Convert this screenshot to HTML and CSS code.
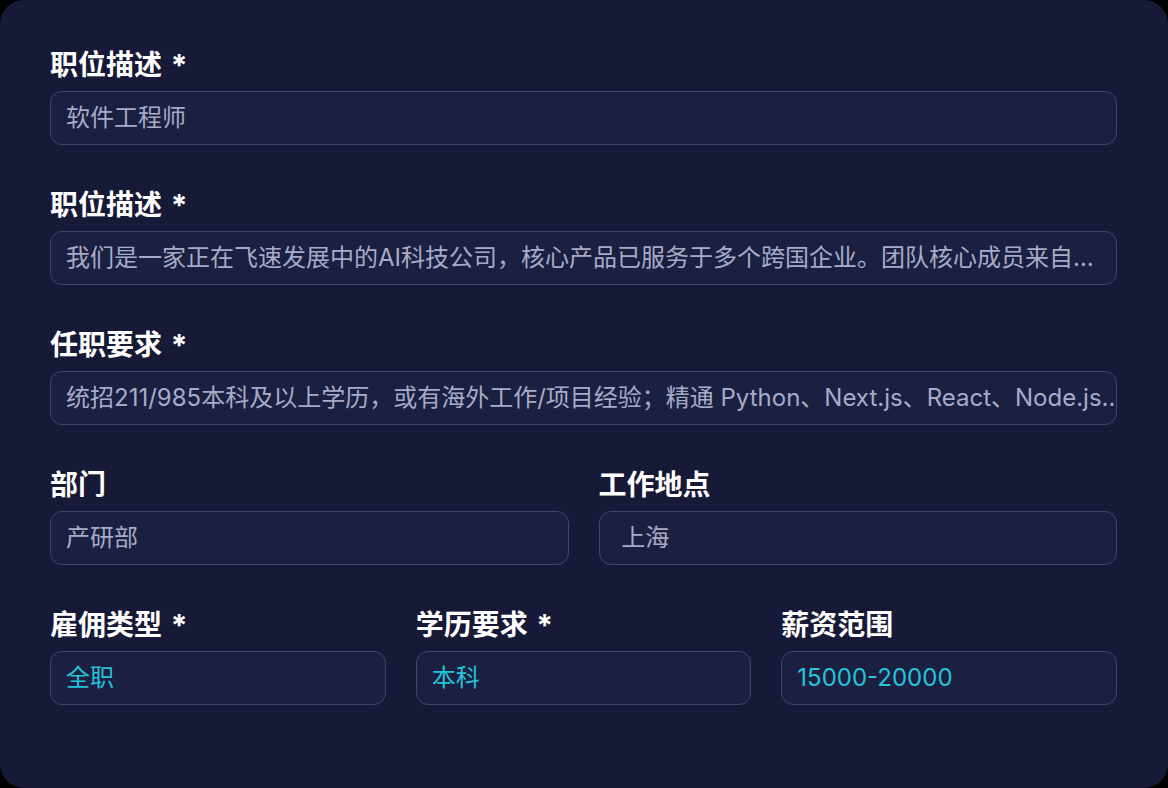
FILE: index.html
```html
<!DOCTYPE html>
<html>
<head>
    <title>职位信息</title>
    <link rel="stylesheet" href="styles.css">
</head>
<body>
    <div class="card">
        <div class="field">
            <label>职位描述 <span class="req">*</span></label>
            <div class="input">软件工程师</div>
        </div>

        <div class="field">
            <label>职位描述 <span class="req">*</span></label>
            <div class="input">我们是一家正在飞速发展中的AI科技公司，核心产品已服务于多个跨国企业。团队核心成员来自国内外知名互联网公司，拥有丰富的行业经验。</div>
        </div>

        <div class="field">
            <label>任职要求 <span class="req">*</span></label>
            <div class="input clip">统招211/985本科及以上学历，或有海外工作/项目经验；精通 Python、Next.js、React、Node.js...</div>
        </div>

        <div class="row two">
            <div class="field">
                <label>部门</label>
                <div class="input">产研部</div>
            </div>
            <div class="field">
                <label>工作地点</label>
                <div class="input">&nbsp;上海</div>
            </div>
        </div>

        <div class="row three">
            <div class="field">
                <label>雇佣类型 <span class="req">*</span></label>
                <div class="input select">全职</div>
            </div>
            <div class="field">
                <label>学历要求 <span class="req">*</span></label>
                <div class="input select">本科</div>
            </div>
            <div class="field">
                <label>薪资范围</label>
                <div class="input select">15000-20000</div>
            </div>
        </div>
    </div>
</body>
</html>
```

FILE: styles.css
```css
html, body {
    margin: 0;
    padding: 0;
    background: #000;
}

body {
    font-family: Inter, "Noto Sans CJK SC", sans-serif;
    color: #fff;
}

.card {
    box-sizing: border-box;
    width: 1168px;
    height: 788px;
    background: #171a36;
    border-radius: 24px;
    padding: 45px 51px 0 50px;
    display: flex;
    flex-direction: column;
    gap: 40px;
}

.field {
    display: flex;
    flex-direction: column;
    gap: 6px;
    min-width: 0;
}

label {
    display: block;
    height: 40px;
    font-size: 28px;
    line-height: 40px;
    font-weight: 700;
    color: #fff;
    white-space: nowrap;
}

.req {
    display: inline-block;
    margin-left: 2px;
    font-size: 30px;
    line-height: 40px;
    vertical-align: top;
}

.input {
    box-sizing: border-box;
    height: 54px;
    padding: 0 16px 0 15px;
    border: 1.5px solid #41456f;
    border-radius: 12px;
    background: #1b1f40;
    color: #a8abc8;
    font-size: 24px;
    line-height: 51px;
    white-space: nowrap;
    overflow: hidden;
    text-overflow: ellipsis;
}

.input.clip {
    padding-right: 0;
    text-overflow: clip;
}

.input.select {
    color: #25c3d9;
}

.row {
    display: grid;
    gap: 30px;
}

.row.two {
    grid-template-columns: 1fr 1fr;
}

.row.three {
    grid-template-columns: 1fr 1fr 1fr;
}
```
